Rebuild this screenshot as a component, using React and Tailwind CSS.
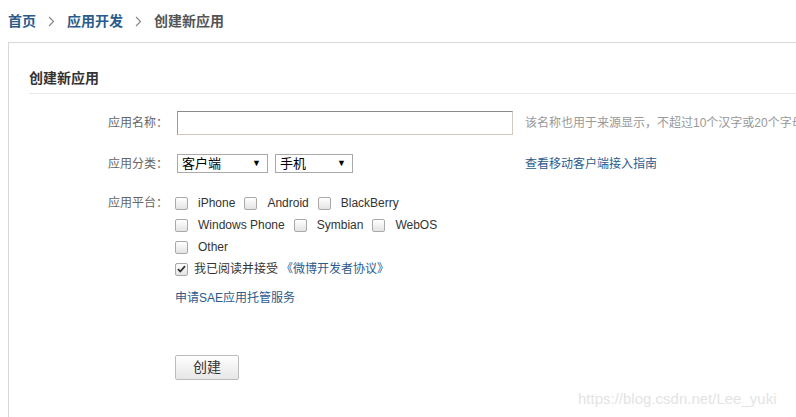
import { useState } from 'react'

const FONT = { fontFamily: '"Liberation Sans", "Noto Sans CJK SC", Arial, sans-serif' }

function Chevron(){
  return (
    <svg width="7" height="11" viewBox="0 0 7 11" className="mx-[12px]">
      <path d="M1 1l4.5 4.5L1 10" fill="none" stroke="#888" strokeWidth="1.2"/>
    </svg>
  )
}

function Box({checked}){
  return (
    <span className="inline-flex items-center justify-center w-[13px] h-[13px] border border-[#a9a9a9] rounded-[2px] bg-gradient-to-b from-white to-[#e3e3e3] shrink-0">
      {checked && (
        <svg width="9" height="8" viewBox="0 0 9 8">
          <path d="M1 4.2l2.3 2.3L8 1.2" fill="none" stroke="#333" strokeWidth="1.8"/>
        </svg>
      )}
    </span>
  )
}

function Check({label}){
  return (
    <span className="inline-flex items-center mr-[9px]">
      <Box/>
      <span className="ml-[10px] text-[12px] text-[#333]">{label}</span>
    </span>
  )
}

function Select({value, w}){
  return (
    <div className={`${w} h-[19px] shrink-0 border border-[#a9a9a9] bg-white flex items-center justify-between pl-[4px] pr-[6px]`}>
      <span className="text-[13px] text-black leading-none">{value}</span>
      <span className="text-[9px] text-black leading-none">▼</span>
    </div>
  )
}

function Row({label, children, className='', labelClass=''}){
  return (
    <div className={`flex ${className}`}>
      <div className={`w-[159px] shrink-0 text-right text-[12px] text-[#666] ${labelClass}`}>{label}</div>
      <div className="ml-[9px] flex-1 min-w-0">{children}</div>
    </div>
  )
}

export default function App(){
  const [name,setName] = useState('')
  return (
    <div className="relative w-[796px] h-[417px] overflow-hidden bg-white whitespace-nowrap" style={FONT}>
      <div className="h-[42px] flex items-center pl-[8px] text-[14px] font-bold leading-none">
        <span className="text-[#2b5b8c]">首页</span>
        <Chevron/>
        <span className="text-[#2b5b8c]">应用开发</span>
        <Chevron/>
        <span className="text-[#555]">创建新应用</span>
      </div>

      <div className="ml-[8px] border-t border-l border-[#d8d8d8] h-[375px]">
        <div className="ml-[20px] pt-[25px] pb-[5px] border-b border-[#e8e8e8]">
          <h2 className="text-[14px] font-bold text-[#333] leading-[20px]">创建新应用</h2>
        </div>

        <Row label="应用名称：" className="mt-[17px] items-center">
          <div className="flex items-center">
            <input value={name} onChange={e=>setName(e.target.value)} className="w-[336px] h-[24px] shrink-0 border border-[#cfc9c0] border-t-[#8a8a8a] border-l-[#9a9a9a] outline-none px-1 text-[12px]"/>
            <span className="ml-[12px] text-[12px] text-[#999]">该名称也用于来源显示，不超过10个汉字或20个字母</span>
          </div>
        </Row>

        <Row label="应用分类：" className="mt-[19px] items-center">
          <div className="flex items-center">
            <Select value="客户端" w="w-[91px]"/>
            <div className="ml-[7px]"><Select value="手机" w="w-[78px]"/></div>
            <a className="ml-[172px] text-[12px] text-[#2b5b8c]">查看移动客户端接入指南</a>
          </div>
        </Row>

        <Row label="应用平台：" className="mt-[19px] items-start" labelClass="leading-[22px]">
          <div className="-ml-[2px]">
            <div className="h-[22px] flex items-center">
              <Check label="iPhone"/>
              <Check label="Android"/>
              <Check label="BlackBerry"/>
            </div>
            <div className="h-[22px] flex items-center">
              <Check label="Windows Phone"/>
              <Check label="Symbian"/>
              <Check label="WebOS"/>
            </div>
            <div className="h-[22px] flex items-center">
              <Check label="Other"/>
            </div>
            <div className="h-[22px] flex items-center">
              <Box checked/>
              <span className="ml-[6px] text-[12px] text-[#333]">我已阅读并接受</span>
              <a className="ml-[3px] text-[12px] text-[#2b5b8c]">《微博开发者协议》</a>
            </div>
            <div className="mt-[8px] h-[20px] flex items-center">
              <a className="text-[12px] text-[#2b5b8c]">申请SAE应用托管服务</a>
            </div>
            <button className="mt-[47px] w-[64px] h-[25px] border border-[#bcbcbc] rounded-[2px] bg-gradient-to-b from-white to-[#e6e6e6] text-[14px] text-[#333]">创建</button>
          </div>
        </Row>
      </div>

      <div className="absolute left-[578px] top-[390px] text-[15px] text-[#e4e4e4] leading-[18px]" style={{fontFamily:'"Liberation Sans", Arial, sans-serif'}}>https://blog.csdn.net/Lee_yuki</div>
    </div>
  )
}
